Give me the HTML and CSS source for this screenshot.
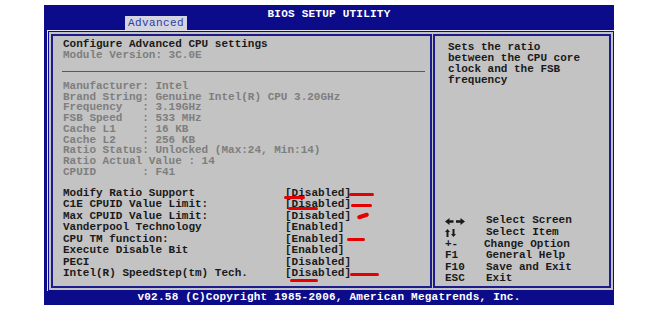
FILE: index.html
```html
<!DOCTYPE html>
<html lang="en">

<head>
    <meta charset="UTF-8">
    <title>BIOS Setup Utility</title>
    <link rel="stylesheet" href="styles.css">
</head>

<body>
    <div class="screen">
        <div class="titlebar">
            <div class="title">BIOS SETUP UTILITY</div>
            <div class="tab">Advanced</div>
        </div>

        <div class="main">
            <div class="frame">
                <div class="panel left-panel">
                    <div class="heading">Configure Advanced CPU settings</div>
                    <div class="muted">Module Version: 3C.0E</div>
                    <div class="rule"></div>

                    <div class="info">
                        <div>Manufacturer: Intel</div>
                        <div>Brand String: Genuine Intel(R) CPU 3.20GHz</div>
                        <div>Frequency &nbsp;&nbsp;: 3.19GHz</div>
                        <div>FSB Speed &nbsp;&nbsp;: 533 MHz</div>
                        <div>Cache L1 &nbsp;&nbsp;&nbsp;: 16 KB</div>
                        <div>Cache L2 &nbsp;&nbsp;&nbsp;: 256 KB</div>
                        <div>Ratio Status: Unlocked (Max:24, Min:14)</div>
                        <div>Ratio Actual Value : 14</div>
                        <div>CPUID &nbsp;&nbsp;&nbsp;&nbsp;&nbsp;&nbsp;: F41</div>
                    </div>

                    <div class="items">
                        <span>Modify Ratio Support</span><span>[Disabled]</span>
                        <span>C1E CPUID Value Limit:</span><span>[Disabled]</span>
                        <span>Max CPUID Value Limit:</span><span>[Disabled]</span>
                        <span>Vanderpool Technology</span><span>[Enabled]</span>
                        <span>CPU TM function:</span><span>[Enabled]</span>
                        <span>Execute Disable Bit</span><span>[Enabled]</span>
                        <span>PECI</span><span>[Disabled]</span>
                        <span>Intel(R) SpeedStep(tm) Tech.</span><span>[Disabled]</span>
                    </div>
                </div>

                <div class="panel right-panel">
                    <div class="help-text">
                        Sets the ratio<br>
                        between the CPU core<br>
                        clock and the FSB<br>
                        frequency
                    </div>

                    <div class="keys">
                        <span class="key">
                            <svg width="20" height="7" viewBox="0 0 20 7">
                                <path d="M0 3.5 L4.5 0 L4.5 2.3 L8.5 2.3 L8.5 4.7 L4.5 4.7 L4.5 7 Z" fill="#1a1a1a" />
                                <path d="M20 3.5 L15.5 0 L15.5 2.3 L11 2.3 L11 4.7 L15.5 4.7 L15.5 7 Z" fill="#1a1a1a" />
                            </svg>
                        </span><span>Select Screen</span>
                        <span class="key">
                            <svg width="11" height="8" viewBox="0 0 11 8">
                                <path d="M2.5 0 L0 3 L1.5 3 L1.5 8 L3.5 8 L3.5 3 L5 3 Z" fill="#1a1a1a" />
                                <path d="M8.5 8 L6 5 L7.5 5 L7.5 0 L9.5 0 L9.5 5 L11 5 Z" fill="#1a1a1a" />
                            </svg>
                        </span><span>Select Item</span>
                        <span class="key">+-</span><span class="shift">Change Option</span>
                        <span class="key">F1</span><span>General Help</span>
                        <span class="key">F10</span><span>Save and Exit</span>
                        <span class="key">ESC</span><span>Exit</span>
                    </div>
                </div>
            </div>
        </div>

        <div class="footer">v02.58 (C)Copyright 1985-2006, American Megatrends, Inc.</div>

        <!-- red pen marks drawn over the screenshot -->
        <span class="mark" style="left: 305px; top: 188px; width: 25px;"></span>
        <span class="mark" style="left: 240px; top: 191px; width: 21px;"></span>
        <span class="mark" style="left: 307px; top: 199px; width: 21px;"></span>
        <span class="mark" style="left: 244px; top: 202px; width: 30px;"></span>
        <span class="mark tilt" style="left: 313px; top: 209px; width: 12px;"></span>
        <span class="mark" style="left: 303px; top: 233px; width: 18px;"></span>
        <span class="mark" style="left: 306px; top: 268px; width: 29px;"></span>
        <span class="mark" style="left: 246px; top: 274px; width: 28px;"></span>
    </div>
</body>

</html>
```

FILE: styles.css
```css
body {
    margin: 0;
    background-color: white;
    font-family: "Liberation Mono", "Courier New", monospace;
    font-size: 11px;
    font-weight: bold;
    color: #1a1a1a;
}

.screen {
    position: relative;
    width: 570px;
    margin: 5px 0 0 44px;
    background-color: #0c0c8a;
}

.titlebar {
    display: grid;
    height: 25px;
}

.title,
.tab {
    grid-area: 1 / 1;
}

.title {
    align-self: start;
    padding-top: 4px;
    line-height: 11px;
    text-align: center;
    color: white;
    letter-spacing: 0.23px;
}

.tab {
    align-self: end;
    justify-self: start;
    margin-left: 81px;
    width: 62px;
    height: 14px;
    line-height: 15px;
    text-align: center;
    background-color: #d4d4e2;
    color: #2a3f9c;
    font-weight: normal;
    letter-spacing: 0.4px;
}

.main {
    margin-left: 3px;
    background-color: #c3c3c3;
    border-top: 1px solid #e2e2ee;
    border-left: 1px solid #e2e2ee;
}

.frame {
    display: flex;
    gap: 1px;
    height: 254px;
    padding: 2px;
    border: 1px solid #0c0c8a;
}

.panel {
    border: 2px solid #1c1c8e;
}

.left-panel {
    box-sizing: border-box;
    width: 381px;
    padding: 3px 5px 0 10px;
}

.heading {
    line-height: 11px;
}

.muted {
    line-height: 11px;
    color: #7e7e7e;
}

.rule {
    height: 1px;
    margin: 10px 0 9px -1px;
    background-color: #2d5cb0;
}

.info {
    line-height: 10.7px;
    color: #7e7e7e;
    white-space: nowrap;
}

.items {
    display: grid;
    grid-template-columns: 222px auto;
    margin-top: 10.5px;
    line-height: 11.5px;
}

.right-panel {
    flex: 1;
    display: flex;
    flex-direction: column;
    padding: 6px 0 1px 13px;
}

.help-text {
    line-height: 11px;
}

.keys {
    display: grid;
    grid-template-columns: 41px auto;
    margin-top: auto;
    margin-left: -3px;
    line-height: 11.6px;
}

.key {
    display: flex;
    align-items: center;
}

.shift {
    margin-left: -2px;
}

.footer {
    height: 14px;
    line-height: 13px;
    text-align: center;
    color: white;
    letter-spacing: 0.24px;
}

.mark {
    position: absolute;
    height: 3px;
    border-radius: 2px;
    background-color: #e60000;
}

.tilt {
    height: 4px;
    transform: rotate(-18deg);
}
```
